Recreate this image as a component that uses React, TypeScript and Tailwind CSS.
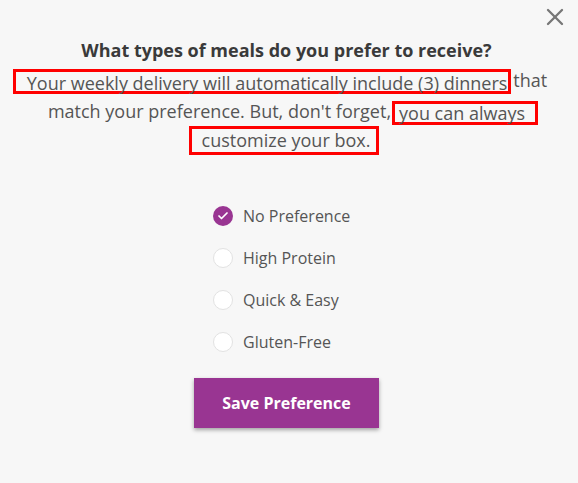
import { X, Check } from 'lucide-react'

const options = ['No Preference', 'High Protein', 'Quick & Easy', 'Gluten-Free']

export default function App() {
  return (
    <div
      className="relative w-[578px] h-[483px] bg-[#f7f7f7] flex flex-col items-center"
      style={{ fontFamily: '"Open Sans", sans-serif' }}
    >
      {/* Close */}
      <button className="absolute right-[9px] top-[3px] text-[#777]">
        <X className="w-[28px] h-[28px]" strokeWidth={2} />
      </button>

      <h2 className="mt-[38px] mr-[5px] text-[18px] leading-[24px] font-bold text-[#3a3a3a]">
        What types of meals do you prefer to receive?
      </h2>

      {/* Description (with red highlight boxes) */}
      <div className="mt-[7px] text-[18px] leading-[29px] text-[#555] flex flex-col items-center">
        <div className="flex mr-[18px]">
          <span className="border-[3px] border-[#f00] pl-[11px] pr-[1px] leading-[23px] h-[25px]">
            Your weekly delivery will automatically include (3) dinners
          </span>
          <span className="ml-[2px] leading-[23px]">that</span>
        </div>
        <div className="flex ml-[8px] mt-[6px]">
          <span className="leading-[23px]">match your preference. But, don't forget,</span>
          <span className="border-[3px] border-[#f00] pl-[4px] pr-[10px] leading-[18px] h-[24px] ml-[1px] mt-[1px]">
            you can always
          </span>
        </div>
        <div className="flex mr-[10px] mt-[1px]">
          <span className="border-[3px] border-[#f00] pl-[10px] pr-[6px] leading-[23px] h-[29px]">
            customize your box.
          </span>
        </div>
      </div>

      {/* Options */}
      <div className="self-start ml-[213px] mt-[51px] flex flex-col gap-[22px]">
        {options.map((o, i) => (
          <label key={o} className="flex items-center gap-[10px] h-[20px] text-[16px] text-[#555]">
            {i === 0 ? (
              <span className="w-[20px] h-[20px] rounded-full bg-[#993592] flex items-center justify-center">
                <Check className="w-[12px] h-[12px] text-white" strokeWidth={3.5} />
              </span>
            ) : (
              <span className="w-[20px] h-[20px] rounded-full bg-white border border-[#e2e2e2]" />
            )}
            {o}
          </label>
        ))}
      </div>

      <button className="mt-[26px] mr-[5px] w-[185px] h-[50px] bg-[#993592] text-white text-[16px] font-bold shadow-[0_2px_4px_rgba(0,0,0,0.35)]">
        Save Preference
      </button>
    </div>
  )
}
